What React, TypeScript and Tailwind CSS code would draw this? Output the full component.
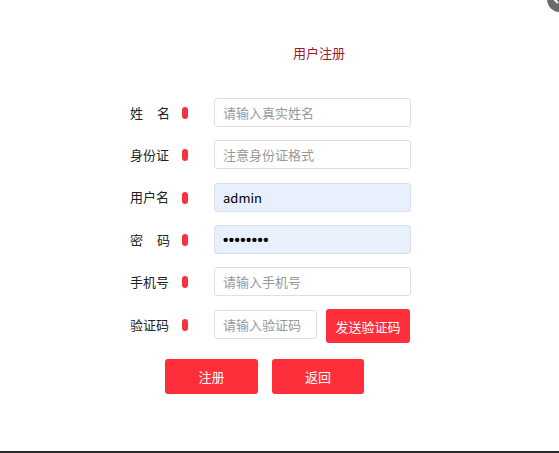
import React from "react";

const font = { fontFamily: '"Noto Sans CJK SC", "Microsoft YaHei", sans-serif' };
const pwFont = { fontFamily: '"Liberation Sans", Arial, sans-serif' };

function Dot() {
  return <span className="ml-[12px] mt-[1px] inline-block h-[12px] w-[6px] shrink-0 rounded-full bg-[#f5333f]" />;
}

function Label({ text, spread }: { text: string; spread?: boolean }) {
  if (spread) {
    const chars = text.split("");
    return (
      <span className="flex w-[40px] justify-between text-[13px] text-[#222]">
        {chars.map((c, i) => (
          <span key={i}>{c}</span>
        ))}
      </span>
    );
  }
  return <span className="w-[40px] text-[13px] text-[#222]">{text}</span>;
}

function Row({
  label,
  spread,
  placeholder,
  value,
  filled,
  password,
}: {
  label: string;
  spread?: boolean;
  placeholder?: string;
  value?: string;
  filled?: boolean;
  password?: boolean;
}) {
  return (
    <div className="flex h-[29px] items-center">
      <Label text={label} spread={spread} />
      <Dot />
      <input
        readOnly
        type="text"
        placeholder={placeholder}
        value={value ?? ""}
        style={password ? pwFont : font}
        className={`ml-[26px] h-[29px] w-[197px] rounded-[3px] border border-[#dcdfe6] px-[8px] text-black outline-none placeholder:text-[#999] ${
          password ? "text-[15px] font-bold tracking-[0.5px]" : "text-[13px]"
        } ${filled ? "bg-[#e8f0fe]" : "bg-white"}`}
      />
    </div>
  );
}

export default function App() {
  return (
    <div className="relative h-[453px] w-[559px] overflow-hidden bg-white" style={font}>
      <div className="absolute right-[-14px] top-[-14px] flex h-[26px] w-[26px] items-center justify-center rounded-full bg-[#6b6b6b]">
        <svg width="26" height="26" viewBox="0 0 26 26" className="absolute left-0 top-0">
          <path d="M6 12 L11 17" stroke="white" strokeWidth="2" fill="none" />
        </svg>
      </div>
      <div className="pl-[293px] pt-[43px] text-[13px] leading-[20px] text-[#9b1c31]">用户注册</div>
      <div className="mt-[35px] flex flex-col gap-[13.25px] pl-[130px]">
        <Row label="姓名" spread placeholder="请输入真实姓名" />
        <Row label="身份证" placeholder="注意身份证格式" />
        <Row label="用户名" value="admin" filled />
        <Row label="密码" spread value="••••••••" filled password />
        <Row label="手机号" placeholder="请输入手机号" />
        <div className="flex items-start">
          <div className="mt-[1px] flex h-[29px] items-center">
            <Label text="验证码" />
            <Dot />
            <input
              readOnly
              placeholder="请输入验证码"
              style={font}
              className="ml-[26px] h-[29px] w-[103px] rounded-[3px] border border-[#dcdfe6] bg-white px-[8px] text-[13px] outline-none placeholder:text-[#999]"
            />
          </div>
          <button className="ml-[9px] h-[34px] w-[84px] rounded-[3px] bg-[#fd2f3b] text-[13px] text-white">
            发送验证码
          </button>
        </div>
      </div>
      <div className="mt-[16px] flex gap-[14px] pl-[165px]">
        <button className="h-[35px] w-[93px] rounded-[3px] bg-[#fd2f3b] text-[13px] text-white">注册</button>
        <button className="h-[35px] w-[92px] rounded-[3px] bg-[#fd2f3b] text-[13px] text-white">返回</button>
      </div>
      <div className="absolute bottom-0 left-0 h-[2px] w-full bg-[#2b2b2b]" />
    </div>
  );
}
